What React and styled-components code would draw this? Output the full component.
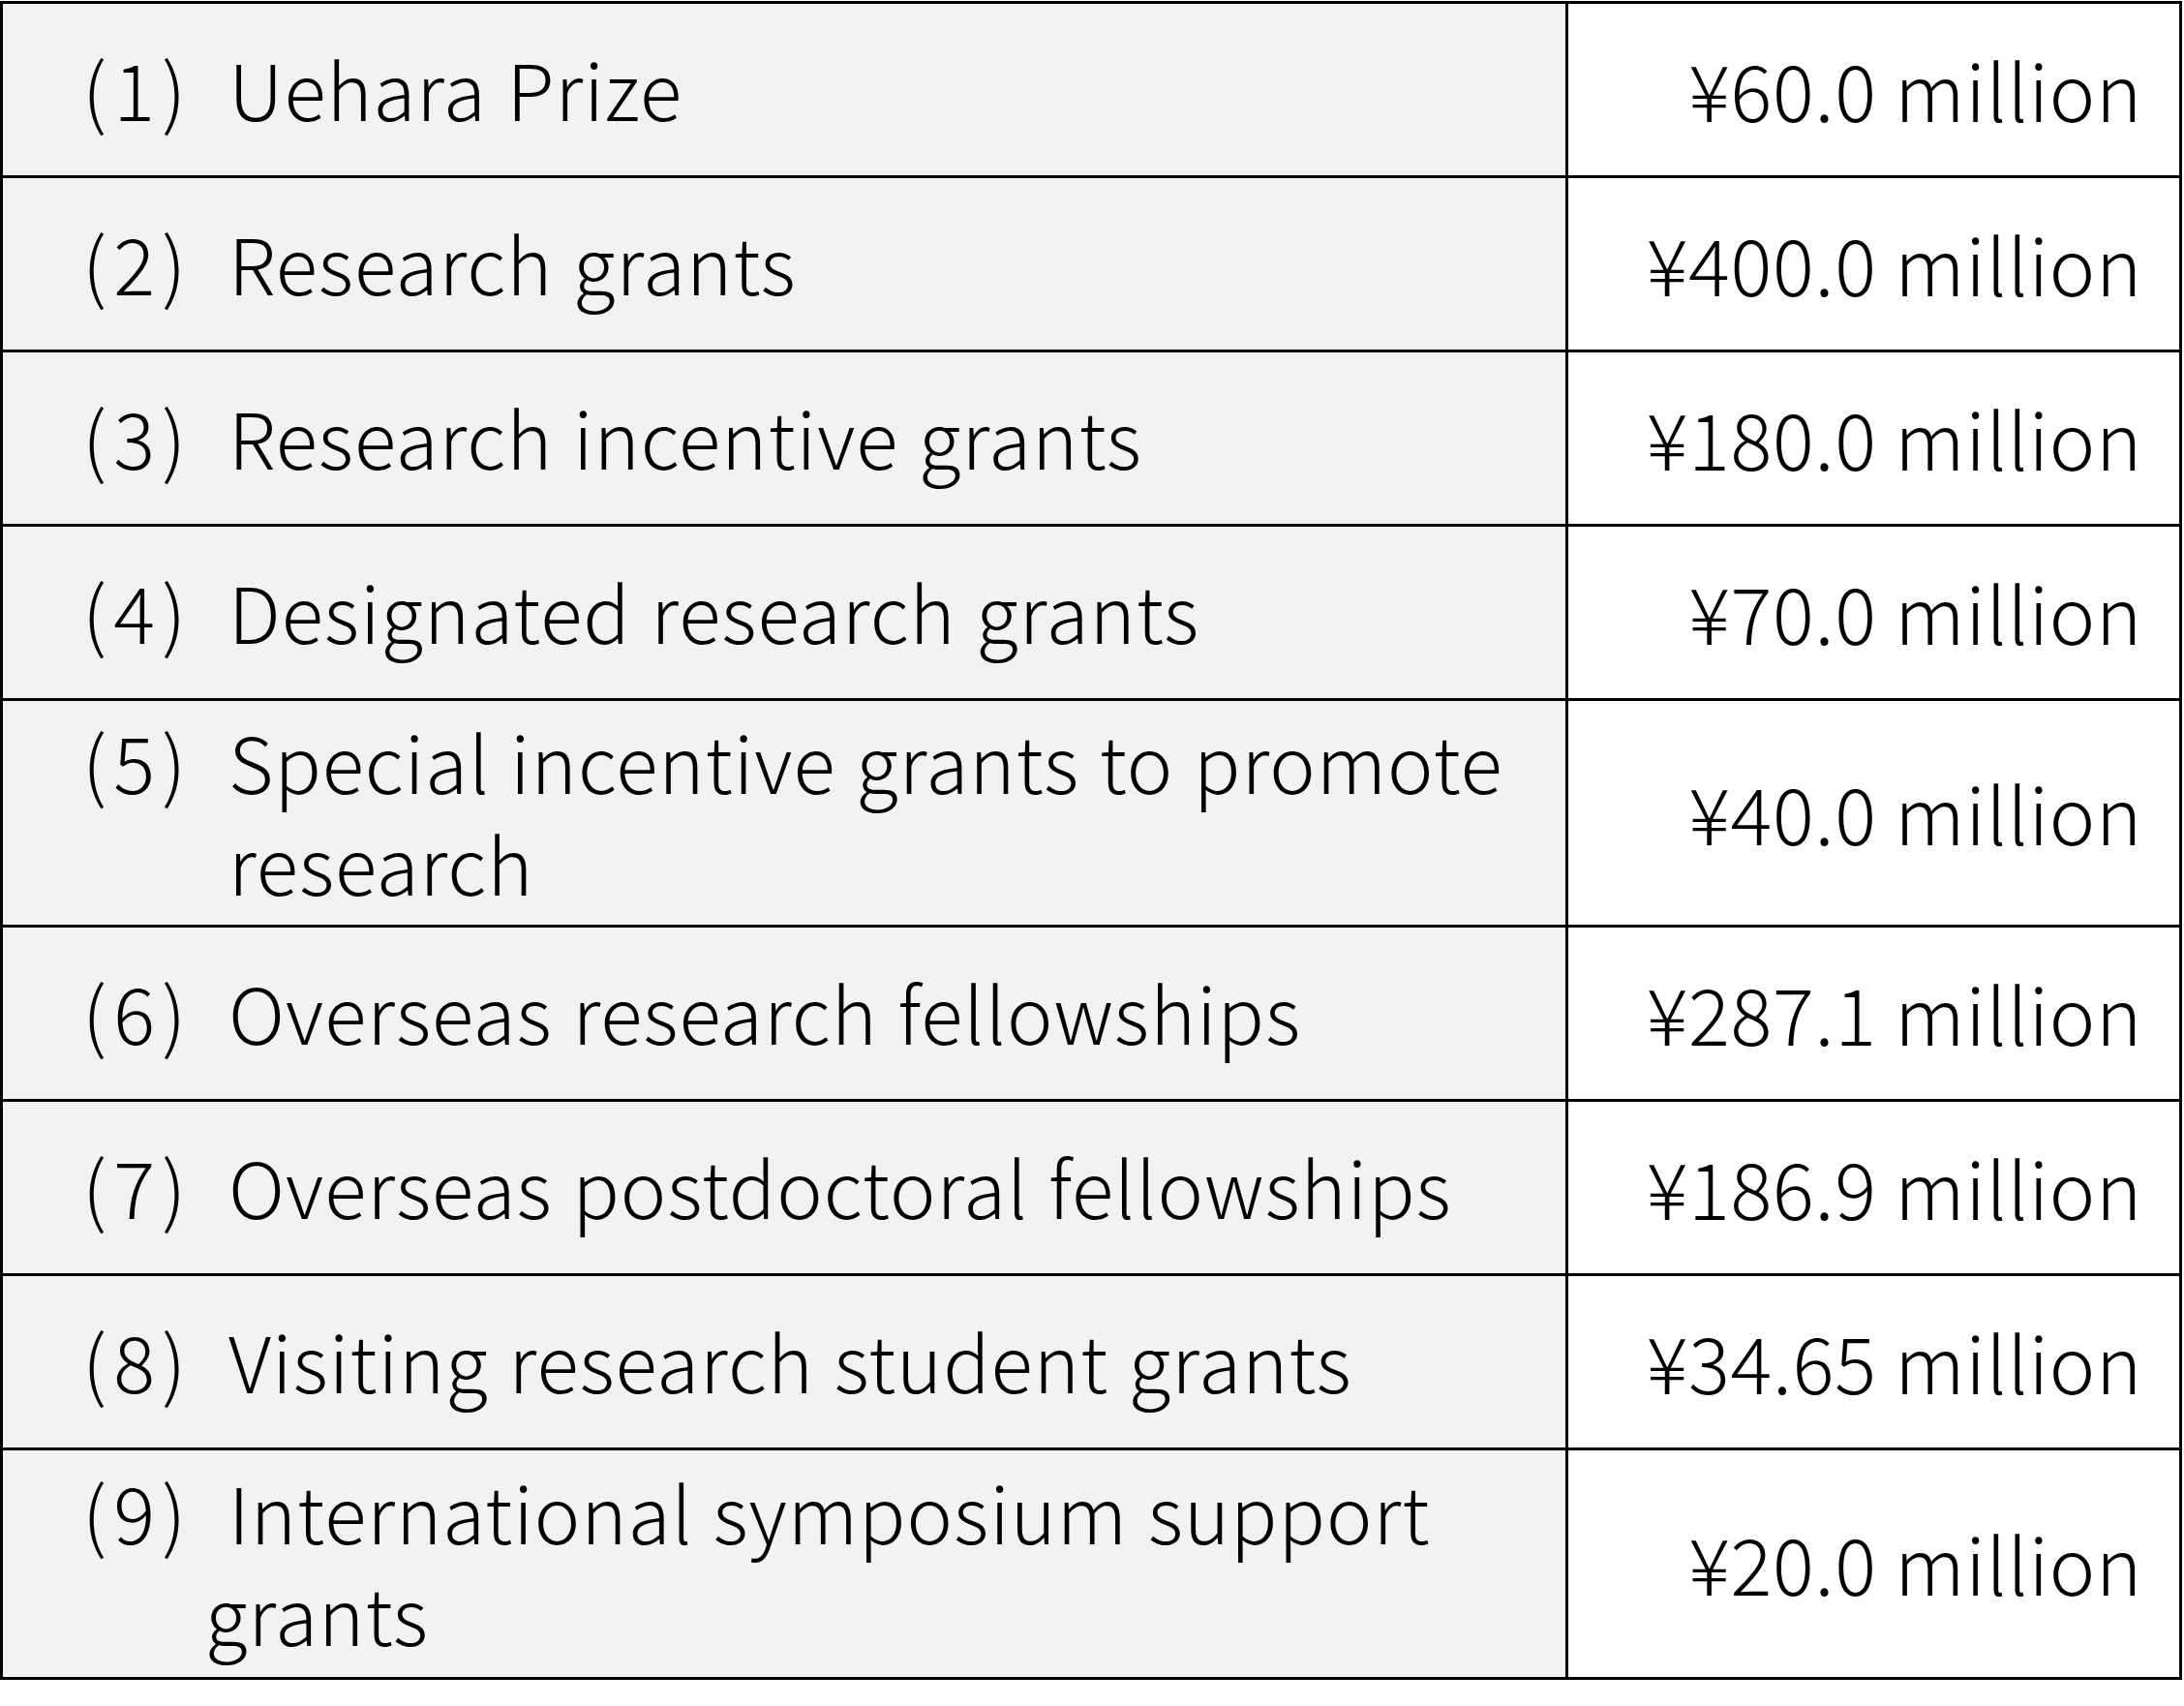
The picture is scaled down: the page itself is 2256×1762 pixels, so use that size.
import React from "react";
import styled, { createGlobalStyle } from "styled-components";

const GlobalStyle = createGlobalStyle`
  html, body {
    margin: 0;
    padding: 0;
    background: #fff;
  }
  body {
    font-family: "Noto Sans CJK JP", "Noto Sans", sans-serif;
    color: #000;
  }
`;

const Table = styled.div`
  width: 2254px;
  box-sizing: border-box;
  border: 3px solid #000;
  margin: 1px 0 0 0;
`;

const Row = styled.div`
  display: grid;
  grid-template-columns: 1617px 1fr;
  box-sizing: border-box;
  height: ${(p) => (p.tall ? 234 : 180)}px;
  border-bottom: ${(p) => (p.last ? "none" : "3px solid #000")};
`;

const LabelCell = styled.div`
  display: flex;
  align-items: center;
  background: #f2f2f2;
  border-right: 3px solid #000;
`;

const LabelText = styled.div`
  padding-left: ${(p) => p.indent}px;
  text-indent: ${(p) => 82 - p.indent}px;
  font-size: 80px;
  font-weight: 300;
  line-height: 105px;
  letter-spacing: 1px;
  word-spacing: 2px;
  padding-bottom: 4px;
`;

const Num = styled.span`
  display: inline-block;
  width: 151px;
  text-indent: 0;
  letter-spacing: 7px;
`;

const AmountCell = styled.div`
  display: flex;
  align-items: center;
  justify-content: flex-end;
  background: #fff;
  padding: 0 38px 4px 0;
  font-size: 80px;
  font-weight: 300;
  letter-spacing: 0.7px;
  white-space: nowrap;
`;

const items = [
  { n: 1, label: "Uehara Prize", amount: "¥60.0 million" },
  { n: 2, label: "Research grants", amount: "¥400.0 million" },
  { n: 3, label: "Research incentive grants", amount: "¥180.0 million" },
  { n: 4, label: "Designated research grants", amount: "¥70.0 million" },
  { n: 5, label: "Special incentive grants to promote research", amount: "¥40.0 million", tall: true, indent: 233 },
  { n: 6, label: "Overseas research fellowships", amount: "¥287.1 million" },
  { n: 7, label: "Overseas postdoctoral fellowships", amount: "¥186.9 million" },
  { n: 8, label: "Visiting research student grants", amount: "¥34.65 million" },
  { n: 9, label: "International symposium support grants", amount: "¥20.0 million", tall: true, indent: 209 },
];

export default function App() {
  return (
    <>
      <GlobalStyle />
      <Table>
        {items.map((it, i) => (
          <Row key={it.n} tall={it.tall} last={i === items.length - 1}>
            <LabelCell>
              <LabelText indent={it.indent || 233}>
                <Num>({it.n})</Num>
                {it.label}
              </LabelText>
            </LabelCell>
            <AmountCell>{it.amount}</AmountCell>
          </Row>
        ))}
      </Table>
    </>
  );
}
